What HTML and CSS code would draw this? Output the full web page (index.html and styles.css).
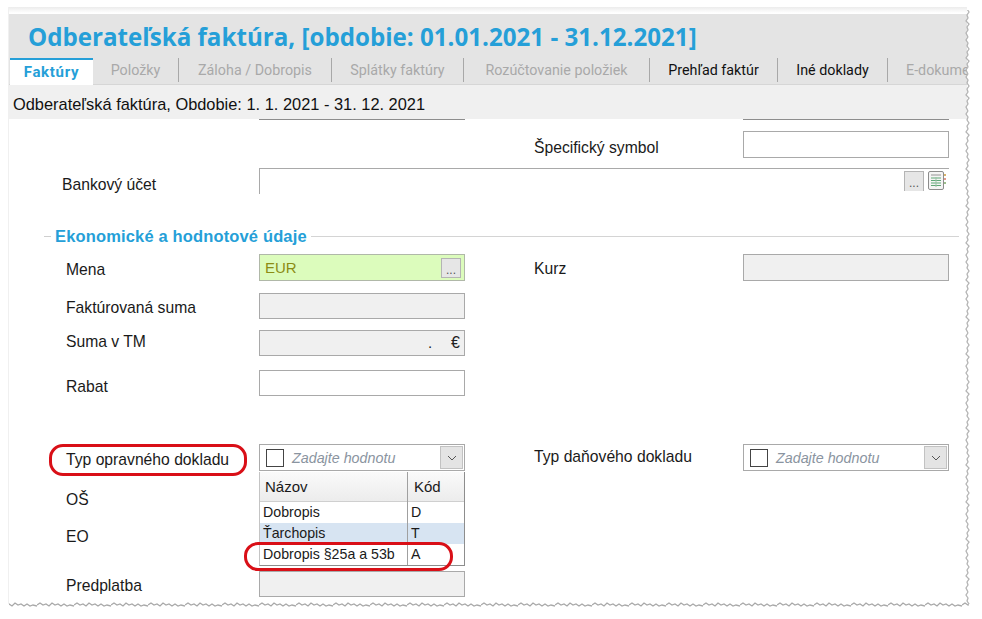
FILE: index.html
```html
<!DOCTYPE html>
<html lang="sk">
<head>
<meta charset="utf-8">
<title>Odberateľská faktúra</title>
<link rel="stylesheet" href="styles.css">
</head>
<body>
<div class="sheet">
  <header class="head">
    <h1 class="title">Odberateľská faktúra, [obdobie: 01.01.2021 - 31.12.2021]</h1>
    <nav class="tabs">
      <span class="tab active t1">Faktúry</span>
      <span class="tab off t2">Položky</span>
      <span class="tab off t3">Záloha / Dobropis</span>
      <span class="tab off t4">Splátky faktúry</span>
      <span class="tab off t5">Rozúčtovanie položiek</span>
      <span class="tab t6">Prehľad faktúr</span>
      <span class="tab t7">Iné doklady</span>
      <span class="tab off t8">E-dokumenty</span>
    </nav>
    <div class="sub">Odberateľská faktúra, Obdobie: 1. 1. 2021 - 31. 12. 2021</div>
  </header>

  <main class="form">
    <div class="row r-cut">
      <span></span><div class="cut"></div><span></span><span></span><div class="cut"></div>
    </div>
    <div class="row r-spec">
      <span></span><span></span><span></span>
      <label class="lab l2 dn4">Špecifický symbol</label>
      <div class="field"></div>
    </div>
    <div class="row-wide r-bank">
      <label class="lab l0 dn5">Bankový účet</label>
      <div class="bank">
        <span class="dots bankdots">...</span>
        <svg class="tableicon" width="19" height="20" viewBox="0 0 19 20">
          <rect x="0.5" y="0.5" width="15" height="18" rx="1.5" fill="#f4f4f4" stroke="#8c8c8c"/>
          <rect x="3" y="3" width="10" height="2" fill="#c4c4c4"/>
          <path d="M3 7h10M3 9.500h10M3 12h10M3 14.500h10" stroke="#5fa777" stroke-width="1.200"/>
          <path d="M8 6v10" stroke="#9dbfa8"/>
          <path d="M17 3v2" stroke="#d9b36a" stroke-width="2"/>
          <path d="M17 7v2" stroke="#e09a8c" stroke-width="2"/>
          <path d="M17 11v2" stroke="#9cc08d" stroke-width="2"/>
        </svg>
      </div>
    </div>
    <div class="section"><span class="section-t">Ekonomické a hodnotové údaje</span></div>
    <div class="row r-mena">
      <label class="lab l1 dn3">Mena</label>
      <div class="field green">EUR<span class="dots">...</span></div>
      <span></span>
      <label class="lab l2 dn2">Kurz</label>
      <div class="field grey"></div>
    </div>
    <div class="row r-fak">
      <label class="lab l1 dn3">Faktúrovaná suma</label>
      <div class="field grey"></div>
    </div>
    <div class="row r-suma">
      <label class="lab l1 up1">Suma v TM</label>
      <div class="field grey money"><span>.</span><span class="euro">€</span></div>
    </div>
    <div class="row r-rabat">
      <label class="lab l1 dn5">Rabat</label>
      <div class="field"></div>
    </div>
    <div class="row r-typ">
      <label class="lab l1 dn3">Typ opravného dokladu</label>
      <div class="combo-wrap">
        <div class="combo">
          <span class="check"></span><span class="hint">Zadajte hodnotu</span>
          <span class="arrow"><svg width="10" height="6" viewBox="0 0 10 6"><path d="M1 1l4 4 4-4" fill="none" stroke="#555"/></svg></span>
        </div>
        <div class="drop">
          <div class="dr dh"><span>Názov</span><span>Kód</span></div>
          <div class="dr"><span>Dobropis</span><span>D</span></div>
          <div class="dr sel"><span>Ťarchopis</span><span>T</span></div>
          <div class="dr"><span>Dobropis §25a a 53b</span><span>A</span></div>
        </div>
      </div>
      <span></span>
      <label class="lab l2 up1">Typ daňového dokladu</label>
      <div class="combo">
        <span class="check"></span><span class="hint">Zadajte hodnotu</span>
        <span class="arrow"><svg width="10" height="6" viewBox="0 0 10 6"><path d="M1 1l4 4 4-4" fill="none" stroke="#555"/></svg></span>
      </div>
    </div>
    <div class="row r-os"><label class="lab l1 dn2">OŠ</label></div>
    <div class="row r-eo"><label class="lab l1 dn2">EO</label></div>
    <div class="row r-pred">
      <label class="lab l1 dn3">Predplatba</label>
      <div class="field grey"></div>
    </div>
  </main>
  <span class="oval oval-a"></span>
  <span class="oval oval-b"></span>
</div>
<svg class="torn" width="982" height="619" viewBox="0 0 982 619" aria-hidden="true">
  <defs>
    <pattern id="jagV" x="960" y="0" width="20" height="37" patternUnits="userSpaceOnUse">
      <path d="M8 0l-2 3 2 3-1 3 2 3-2 3 1 3-2 3 3 3-2 3 1 3-2 3 2 4" fill="none" stroke="#b4b4b4" stroke-width="1.300"/>
    </pattern>
    <pattern id="jagH" x="0" y="598" width="37" height="14" patternUnits="userSpaceOnUse">
      <path d="M0 7l3-2 3 2 3-1 3 2 3-3 3 2 3-1 3 2 3-2 3 2 3-1 4 1" fill="none" stroke="#a8a8a8" stroke-width="1.300"/>
    </pattern>
    <filter id="soft"><feGaussianBlur stdDeviation="0.600"/></filter>
  </defs>
  <g filter="url(#soft)">
    <rect x="960" y="10" width="20" height="594" fill="url(#jagV)"/>
    <rect x="9" y="598" width="960" height="14" fill="url(#jagH)"/>
  </g>
</svg>
</body>
</html>
```
FILE: styles.css
```css
* { box-sizing: border-box; }
html, body { margin: 0; padding: 0; background: #fff; }
body { width: 982px; height: 619px; overflow: hidden; position: relative; font-family: "Liberation Sans", Arial, sans-serif; color: #1a1a1a; }

.sheet { position: relative; width: 959px; height: 597px; margin: 7px 0 0 8px; padding-top: 7px; overflow: hidden; background: linear-gradient(#ececec, #fff 6px); border-left: 1px solid #f0f0f0; }
.head { margin-left: -1px; }
.title { margin: 0; height: 44px; padding: 8px 0 0 20px; background: #e4e4e4; font: 700 24.150px/30px "Open Sans", sans-serif; color: #259fd8; white-space: nowrap; }
.tabs { display: flex; height: 27px; background: #e4e4e4; border-bottom: 1px solid #d6d6d6; font: 400 14.300px/27px Roboto, sans-serif; white-space: nowrap; margin-left: 0; padding-left: 2px; }
.tab { color: #111; border-right: 1px solid #a8a8a8; margin: 0 0 2px; line-height: 25px; text-align: center; flex: none; }
.tab.off { color: #a9a9a9; }
.tab.active { background: #fff; color: #259fd8; font-weight: 700; font-size: 15px; letter-spacing: 0.700px; border-top: 2px solid #259fd8; border-right: 0; margin-bottom: -1px; line-height: 24px; }
.t1 { width: 83px; }
.t2 { width: 86px; }
.t3 { width: 153px; }
.t4 { width: 132px; }
.t5 { width: 186px; }
.t6 { width: 128px; }
.t7 { width: 110px; }
.t8 { width: 110px; border-right: 0; text-align: left; padding-left: 18px; }
.sub { height: 34px; padding: 10px 0 0 5px; background: #f0f0f0; font-size: 16.400px; line-height: 19px; color: #111; white-space: nowrap; }

.form { display: flex; flex-direction: column; }
.row { display: grid; grid-template-columns: 250px 206px 69px 209px 206px; align-items: stretch; }
.row-wide { display: grid; grid-template-columns: 250px 690px; }
.lab { font-size: 15.700px; line-height: 18px; align-self: center; color: #1a1a1a; white-space: nowrap; }
.l0 { padding-left: 53px; }
.l1 { padding-left: 57px; }
.l2 { padding-left: 0; }
.dn2 { padding-top: 2px; }
.dn3 { padding-top: 4px; }
.dn4 { padding-top: 6px; }
.dn5 { padding-top: 8px; }
.up1 { padding-bottom: 2px; }

.cut { height: 1px; background: #8d8d8d; }
.r-cut { height: 1px; }
.r-spec { margin-top: 11px; height: 27px; }
.r-bank { margin-top: 10px; height: 23px; }
.r-mena { margin-top: 8px; height: 27px; }
.r-fak { margin-top: 12px; height: 26px; }
.r-suma { margin-top: 11px; height: 26px; }
.r-rabat { margin-top: 14px; height: 26px; }
.r-typ { margin-top: 48px; height: 27px; }
.r-os { margin-top: 16px; height: 24px; }
.r-eo { margin-top: 13px; height: 24px; }
.r-pred { margin-top: 23px; height: 26px; }

.field { border: 1px solid #a9a9a9; background: #fff; font-size: 15px; }
.field.grey { background: #f0f0f0; }
.field.green { background: #dcfcbc; border-color: #b0b8a8; color: #8c8c14; display: flex; align-items: center; justify-content: space-between; padding: 0 3px 0 5px; }
.money { display: flex; justify-content: flex-end; gap: 19px; padding: 3px 4px 0 0; color: #222; }
.euro { font-size: 16px; }
.dots { width: 20px; height: 20px; background: #e6e6e6; border: 1px solid #b4b4b4; color: #555; font-size: 12px; line-height: 23px; text-align: center; flex: none; overflow: hidden; }

.bank { border-top: 1px solid #a9a9a9; border-left: 1px solid #a9a9a9; display: flex; justify-content: flex-end; align-items: flex-start; gap: 4px; padding: 2px 1px 0 0; }
.bankdots { border-bottom: 0; }
.tableicon { flex: none; margin-right: 1px; }

.section { height: 20px; display: flex; align-items: center; margin: 35px 8px 0 35px; gap: 4px; }
.section::before { content: ""; width: 7px; height: 1px; background: #cfcfcf; }
.section::after { content: ""; flex: 1; height: 1px; background: #d4d4d4; }
.section-t { font-size: 16.500px; font-weight: 700; color: #259fd8; white-space: nowrap; letter-spacing: 0.150px; }

.combo-wrap { position: relative; }
.combo { height: 27px; border: 1px solid #a9a9a9; background: #fff; display: flex; align-items: center; padding: 0 1px 0 6px; }
.check { width: 18px; height: 18px; border: 1px solid #444; background: #fff; flex: none; }
.hint { margin-left: 8px; flex: 1; font-size: 14.300px; font-style: italic; color: #8a94a0; white-space: nowrap; }
.arrow { width: 23px; height: 23px; background: #e4e4e4; border: 1px solid #c2c2c2; display: flex; align-items: center; justify-content: center; flex: none; }
.drop { position: absolute; left: 0; top: 28px; width: 206px; z-index: 2; background: #fff; border-left: 1px solid #c4c4c4; border-right: 1px solid #8d8d8d; border-bottom: 1px solid #8d8d8d; }
.dr { display: grid; grid-template-columns: 148px 1fr; height: 21px; font-size: 14.200px; line-height: 21px; color: #1a1a1a; }
.dr span { padding-left: 3px; white-space: nowrap; }
.dr span:first-child { border-right: 1px solid #a0a0a0; padding-left: 3px; }
.dr.sel { background: #d7e4f2; }
.dh { height: 30px; line-height: 30px; font-size: 15px; background: linear-gradient(#fafafa, #ececec); border-bottom: 1px solid #cfcfcf; }
.dh span { padding-left: 6px; }
.dr.dh span:first-child { padding-left: 5px; }

.oval { position: absolute; border: 3px solid #d90f17; z-index: 3; pointer-events: none; }
.oval-a { left: 40px; top: 437px; width: 198px; height: 32px; border-radius: 14px; }
.oval-b { left: 235px; top: 535px; width: 209px; height: 29px; border-radius: 14px; }

.torn { position: absolute; left: 0; top: 0; pointer-events: none; }
```
